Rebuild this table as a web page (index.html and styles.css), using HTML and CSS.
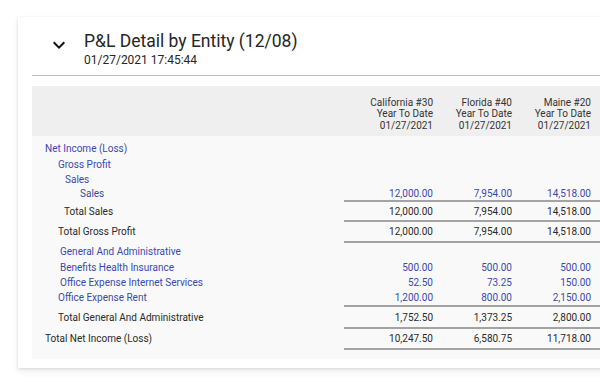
FILE: index.html
```html
<!DOCTYPE html>
<html>
<head>
<meta charset="utf-8">
<link rel="stylesheet" href="styles.css">
</head>
<body>
<div class="page">
  <div class="card">
    <div class="head">
      <svg class="chev" width="24" height="24" viewBox="0 0 24 24"><path d="M16.59 8.59L12 13.17 7.41 8.59 6 10l6 6 6-6z" fill="#111"/></svg>
      <div class="titles">
        <div class="title">P&amp;L Detail by Entity (12/08)</div>
        <div class="sub">01/27/2021 17:45:44</div>
      </div>
    </div>
    <div class="table">
      <div class="thead row">
        <div class="lab"></div>
        <div class="num">California #30<br>Year To Date<br>01/27/2021</div>
        <div class="num">Florida #40<br>Year To Date<br>01/27/2021</div>
        <div class="num">Maine #20<br>Year To Date<br>01/27/2021</div>
        <div></div>
      </div>
      <div class="tbody">
        <div class="row h16 blue"><div class="lab i0">Net Income (Loss)</div></div>
        <div class="row h16 blue"><div class="lab i1">Gross Profit</div></div>
        <div class="row h14 blue"><div class="lab i2">Sales</div></div>
        <div class="row h16 blue line"><div class="lab i3">Sales</div><div class="num">12,000.00</div><div class="num">7,954.00</div><div class="num">14,518.00</div><div></div></div>
        <div class="row h20 line"><div class="lab i4">Total Sales</div><div class="num">12,000.00</div><div class="num">7,954.00</div><div class="num">14,518.00</div><div></div></div>
        <div class="row h21 line"><div class="lab i1">Total Gross Profit</div><div class="num">12,000.00</div><div class="num">7,954.00</div><div class="num">14,518.00</div><div></div></div>
        <div class="row h16 blue"><div class="lab i5">General And Administrative</div></div>
        <div class="row h16 blue"><div class="lab i5">Benefits Health Insurance</div><div class="num">500.00</div><div class="num">500.00</div><div class="num">500.00</div><div></div></div>
        <div class="row h15 blue"><div class="lab i5">Office Expense Internet Services</div><div class="num">52.50</div><div class="num">73.25</div><div class="num">150.00</div><div></div></div>
        <div class="row h17 blue line"><div class="lab i1">Office Expense Rent</div><div class="num">1,200.00</div><div class="num">800.00</div><div class="num">2,150.00</div><div></div></div>
        <div class="row h22 line"><div class="lab i1">Total General And Administrative</div><div class="num">1,752.50</div><div class="num">1,373.25</div><div class="num">2,800.00</div><div></div></div>
        <div class="row h21 line"><div class="lab i0">Total Net Income (Loss)</div><div class="num">10,247.50</div><div class="num">6,580.75</div><div class="num">11,718.00</div><div></div></div>
      </div>
    </div>
  </div>
</div>
</body>
</html>
```
FILE: styles.css
```css
*, *::before, *::after {
  box-sizing: border-box;
}
html, body {
  margin: 0;
  padding: 0;
  background: #fff;
  overflow: hidden;
  width: 600px;
  height: 391px;
}
body {
  font-family: Roboto, "Liberation Sans", sans-serif;
  color: #2a2a2a;
}
.page {
  padding: 17px 0 0 18px;
}
.card {
  width: 640px;
  background: #fff;
  box-shadow: 0 1px 3px rgba(0,0,0,0.12), 0 4px 8px rgba(0,0,0,0.06);
  padding: 0 0 9px 14px;
}
.head {
  height: 59px;
  border-bottom: 1px solid #bdbdbd;
  display: flex;
  align-items: flex-start;
  padding-left: 15px;
  width: 568px;
}
.chev {
  margin-top: 16px;
  margin-right: 13px;
}
.titles {
  padding-top: 12px;
}
.title {
  font-size: 17.5px;
  line-height: 24px;
  color: #262626;
}
.sub {
  font-size: 12px;
  line-height: 14px;
  color: #262626;
}
.table {
  margin-top: 10px;
  width: 568px;
}
.row {
  display: grid;
  grid-template-columns: 312px 89px 79px 79px 9px;
  align-items: center;
  font-size: 10px;
}
.thead {
  background: #efefef;
  height: 50px;
  color: #333;
  line-height: 11.5px;
  padding-top: 6px;
}
.tbody {
  background: #f9f9f9;
  padding: 4px 0 9px;
}
.num {
  text-align: right;
}
.blue { color: #3949ab; }
.h14 { height: 14px; }
.h15 { height: 15px; }
.h16 { height: 16px; }
.h17 { height: 17px; }
.h20 { height: 20px; }
.h21 { height: 21px; }
.h22 { height: 22px; }
.row.line {
  align-items: stretch;
}
.line .num,
.line .num + div {
  border-bottom: 2px solid #a3a3a3;
  display: flex;
  align-items: center;
  justify-content: flex-end;
}
.row.line .lab {
  display: flex;
  align-items: center;
  padding-bottom: 2px;
}
.lab { white-space: nowrap; }
.i0 { padding-left: 13px; }
.i1 { padding-left: 26px; }
.i2 { padding-left: 33px; }
.i3 { padding-left: 48px; }
.i4 { padding-left: 32px; }
.i5 { padding-left: 28px; }
```
